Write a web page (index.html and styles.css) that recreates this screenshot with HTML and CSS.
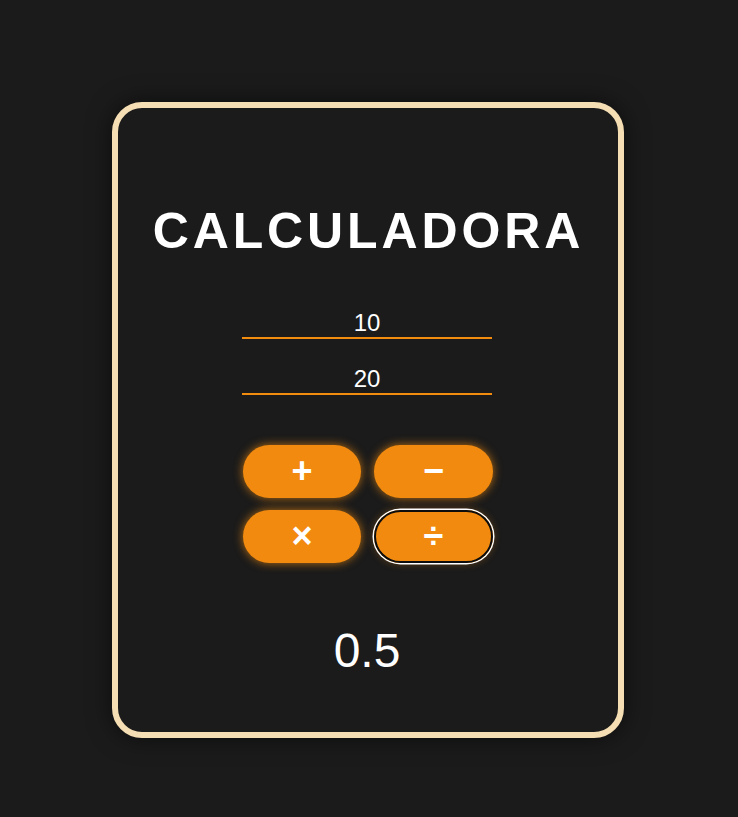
FILE: index.html
```html
<!DOCTYPE html>
<html lang="es">
<head>
<meta charset="utf-8">
<title>Calculadora</title>
<link rel="stylesheet" href="styles.css">
</head>
<body>
<main class="card">
  <h1 class="title">CALCULADORA</h1>
  <div class="fields">
    <input class="field" type="text" value="10">
    <input class="field" type="text" value="20">
  </div>
  <div class="ops">
    <button class="op">+</button>
    <button class="op">−</button>
    <button class="op">×</button>
    <button class="op op-focus">÷</button>
  </div>
  <div class="result">0.5</div>
</main>
</body>
</html>
```

FILE: styles.css
```css
html, body {
  margin: 0;
  padding: 0;
  background: #1b1b1b;
  font-family: "Liberation Sans", Arial, sans-serif;
}
body {
  display: flex;
  justify-content: center;
  padding-top: 102px;
  padding-right: 2px;
  height: 817px;
  box-sizing: border-box;
}
.card {
  width: 498px;
  border: 6px solid #f5deb3;
  border-radius: 30px;
  background: #1b1b1b;
  box-shadow: 0 0 24px rgba(0, 0, 0, 0.55);
  padding: 93px 2px 53px 0;
  display: flex;
  flex-direction: column;
  align-items: center;
  align-self: flex-start;
}
.title {
  margin: 0;
  font-size: 50px;
  line-height: 60px;
  font-weight: 700;
  color: #ffffff;
  letter-spacing: 3.9px;
  padding-left: 3px;
}
.fields {
  margin-top: 48px;
  display: flex;
  flex-direction: column;
  gap: 26px;
}
.field {
  width: 250px;
  height: 30px;
  box-sizing: border-box;
  padding: 0;
  margin: 0;
  background: transparent;
  border: none;
  border-bottom: 2px solid #f28c0f;
  color: #ffffff;
  font-family: "Liberation Sans", Arial, sans-serif;
  font-size: 24px;
  text-align: center;
  outline: none;
}
.ops {
  margin-top: 50px;
  margin-left: 2px;
  width: 250px;
  display: grid;
  grid-template-columns: 118px 119px;
  column-gap: 13px;
  row-gap: 12px;
}
.op {
  height: 53px;
  border: none;
  border-radius: 27px;
  background: #f28a0f;
  color: #ffffff;
  font-family: "Liberation Sans", Arial, sans-serif;
  font-size: 36px;
  font-weight: 700;
  line-height: 1;
  padding: 0 0 2px;
  box-shadow: 0 0 10px rgba(242, 140, 15, 0.75);
}
.op-focus {
  box-shadow: inset 0 0 0 2px #0d0d0d, 0 0 0 1.5px #ffffff, 0 0 8px rgba(242, 140, 15, 0.4);
}
.result {
  margin-top: 60px;
  font-size: 48px;
  line-height: 56px;
  color: #ffffff;
}
```
